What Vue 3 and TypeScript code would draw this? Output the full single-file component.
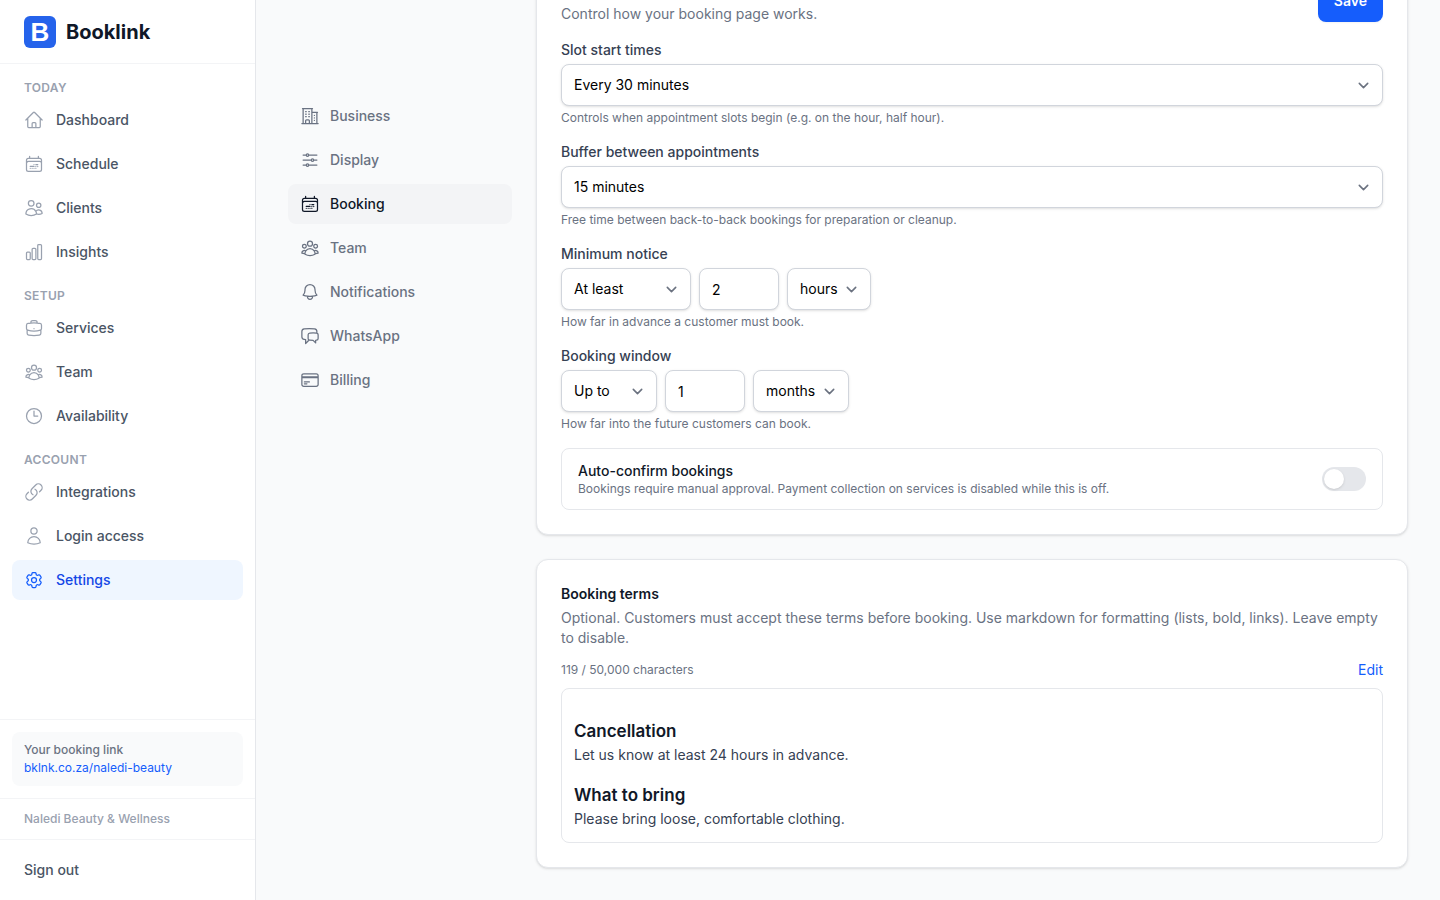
<script setup lang="ts">
import { onMounted, ref } from 'vue'

interface NavItem {
  label: string
  icon: string
  active?: boolean
}

interface NavGroup {
  title: string
  items: NavItem[]
}

const icons: Record<string, string> = {
  home: 'm2.25 12 8.954-8.955c.44-.439 1.152-.439 1.591 0L21.75 12M4.5 9.75v10.125c0 .621.504 1.125 1.125 1.125H9.75v-4.875c0-.621.504-1.125 1.125-1.125h2.25c.621 0 1.125.504 1.125 1.125V21h4.125c.621 0 1.125-.504 1.125-1.125V9.75M8.25 21h8.25',
  calendar: 'M6.75 2.994v2.25m10.5-2.25v2.25m-14.252 13.5V7.491a2.25 2.25 0 0 1 2.25-2.25h13.5a2.25 2.25 0 0 1 2.25 2.25v11.251m-18 0a2.25 2.25 0 0 0 2.25 2.25h13.5a2.25 2.25 0 0 0 2.25-2.25m-18 0v-7.5a2.25 2.25 0 0 1 2.25-2.25h13.5a2.25 2.25 0 0 1 2.25 2.25v7.5m-6.75-6h2.25m-9 2.25h4.5m.002-2.25h.005v.006H12v-.006Zm-.001 4.5h.006v.006h-.006v-.005Zm-2.25.001h.005v.006H9.75v-.006Zm-2.25 0h.005v.005h-.006v-.005Zm6.75-2.247h.005v.005h-.005v-.005Zm0 2.247h.006v.006h-.006v-.006Zm2.25-2.248h.006V15H16.5v-.005Z',
  users: 'M15 19.128a9.38 9.38 0 0 0 2.625.372 9.337 9.337 0 0 0 4.121-.952 4.125 4.125 0 0 0-7.533-2.493M15 19.128v-.003c0-1.113-.285-2.16-.786-3.07M15 19.128v.106A12.318 12.318 0 0 1 8.624 21c-2.331 0-4.512-.645-6.374-1.766l-.001-.109a6.375 6.375 0 0 1 11.964-3.07M12 6.375a3.375 3.375 0 1 1-6.75 0 3.375 3.375 0 0 1 6.75 0Zm8.25 2.25a2.625 2.625 0 1 1-5.25 0 2.625 2.625 0 0 1 5.25 0Z',
  chart: 'M3 13.125C3 12.504 3.504 12 4.125 12h2.25c.621 0 1.125.504 1.125 1.125v6.75C7.5 20.496 6.996 21 6.375 21h-2.25A1.125 1.125 0 0 1 3 19.875v-6.75ZM9.75 8.625c0-.621.504-1.125 1.125-1.125h2.25c.621 0 1.125.504 1.125 1.125v11.25c0 .621-.504 1.125-1.125 1.125h-2.25a1.125 1.125 0 0 1-1.125-1.125V8.625ZM16.5 4.125c0-.621.504-1.125 1.125-1.125h2.25C20.496 3 21 3.504 21 4.125v15.75c0 .621-.504 1.125-1.125 1.125h-2.25a1.125 1.125 0 0 1-1.125-1.125V4.125Z',
  briefcase: 'M20.25 14.15v4.25c0 1.094-.787 2.036-1.872 2.18-2.087.277-4.216.42-6.378.42s-4.291-.143-6.378-.42c-1.085-.144-1.872-1.086-1.872-2.18v-4.25m16.5 0a2.18 2.18 0 0 0 .75-1.661V8.706c0-1.081-.768-2.015-1.837-2.175a48.114 48.114 0 0 0-3.413-.387m4.5 8.006c-.194.165-.42.295-.673.38A23.978 23.978 0 0 1 12 15.75c-2.648 0-5.195-.429-7.577-1.22a2.016 2.016 0 0 1-.673-.38m0 0A2.18 2.18 0 0 1 3 12.489V8.706c0-1.081.768-2.015 1.837-2.175a48.111 48.111 0 0 1 3.413-.387m7.5 0V5.25A2.25 2.25 0 0 0 13.5 3h-3a2.25 2.25 0 0 0-2.25 2.25v.894m7.5 0a48.667 48.667 0 0 0-7.5 0M12 12.75h.008v.008H12v-.008Z',
  group: 'M18 18.72a9.094 9.094 0 0 0 3.741-.479 3 3 0 0 0-4.682-2.72m.94 3.198.001.031c0 .225-.012.447-.037.666A11.944 11.944 0 0 1 12 21c-2.17 0-4.207-.576-5.963-1.584A6.062 6.062 0 0 1 6 18.719m12 0a5.971 5.971 0 0 0-.941-3.197m0 0A5.995 5.995 0 0 0 12 12.75a5.995 5.995 0 0 0-5.058 2.772m0 0a3 3 0 0 0-4.681 2.72 8.986 8.986 0 0 0 3.74.477m.94-3.197a5.971 5.971 0 0 0-.94 3.197M15 6.75a3 3 0 1 1-6 0 3 3 0 0 1 6 0Zm6 3a2.25 2.25 0 1 1-4.5 0 2.25 2.25 0 0 1 4.5 0Zm-13.5 0a2.25 2.25 0 1 1-4.5 0 2.25 2.25 0 0 1 4.5 0Z',
  clock: 'M12 6v6h4.5m4.5 0a9 9 0 1 1-18 0 9 9 0 0 1 18 0Z',
  link: 'M13.19 8.688a4.5 4.5 0 0 1 1.242 7.244l-4.5 4.5a4.5 4.5 0 0 1-6.364-6.364l1.757-1.757m13.35-.622 1.757-1.757a4.5 4.5 0 0 0-6.364-6.364l-4.5 4.5a4.5 4.5 0 0 0 1.242 7.244',
  user: 'M15.75 6a3.75 3.75 0 1 1-7.5 0 3.75 3.75 0 0 1 7.5 0ZM4.501 20.118a7.5 7.5 0 0 1 14.998 0A17.933 17.933 0 0 1 12 21.75c-2.676 0-5.216-.584-7.499-1.632Z',
  cog: 'M9.594 3.94c.09-.542.56-.94 1.11-.94h2.593c.55 0 1.02.398 1.11.94l.213 1.281c.063.374.313.686.645.87.074.04.147.083.22.127.325.196.72.257 1.075.124l1.217-.456a1.125 1.125 0 0 1 1.37.49l1.296 2.247a1.125 1.125 0 0 1-.26 1.431l-1.003.827c-.293.241-.438.613-.43.992a7.723 7.723 0 0 1 0 .255c-.008.378.137.75.43.991l1.004.827c.424.35.534.955.26 1.43l-1.298 2.247a1.125 1.125 0 0 1-1.369.491l-1.217-.456c-.355-.133-.75-.072-1.076.124a6.47 6.47 0 0 1-.22.128c-.331.183-.581.495-.644.869l-.213 1.281c-.09.543-.56.94-1.11.94h-2.594c-.55 0-1.019-.398-1.11-.94l-.213-1.281c-.062-.374-.312-.686-.644-.87a6.52 6.52 0 0 1-.22-.127c-.325-.196-.72-.257-1.076-.124l-1.217.456a1.125 1.125 0 0 1-1.369-.49l-1.297-2.247a1.125 1.125 0 0 1 .26-1.431l1.004-.827c.292-.24.437-.613.43-.991a6.932 6.932 0 0 1 0-.255c.007-.38-.138-.751-.43-.992l-1.004-.827a1.125 1.125 0 0 1-.26-1.43l1.297-2.247a1.125 1.125 0 0 1 1.37-.491l1.216.456c.356.133.751.072 1.076-.124.072-.044.146-.086.22-.128.332-.183.582-.495.644-.869l.214-1.28ZM15 12a3 3 0 1 1-6 0 3 3 0 0 1 6 0Z',
  building: 'M2.25 21h19.5m-18-18v18m10.5-18v18m6-13.5V21M6.75 6.75h.75m-.75 3h.75m-.75 3h.75m3-6h.75m-.75 3h.75m-.75 3h.75M6.75 21v-3.375c0-.621.504-1.125 1.125-1.125h2.25c.621 0 1.125.504 1.125 1.125V21M3 3h12m-.75 4.5H21m-3.75 3.75h.008v.008h-.008v-.008Zm0 3h.008v.008h-.008v-.008Zm0 3h.008v.008h-.008v-.008Z',
  sliders: 'M10.5 6h9.75M10.5 6a1.5 1.5 0 1 1-3 0m3 0a1.5 1.5 0 1 0-3 0M3.75 6H7.5m3 12h9.75m-9.75 0a1.5 1.5 0 0 1-3 0m3 0a1.5 1.5 0 0 0-3 0m-3.75 0H7.5m9-6h3.75m-3.75 0a1.5 1.5 0 0 1-3 0m3 0a1.5 1.5 0 0 0-3 0m-9.75 0h9.75',
  bell: 'M14.857 17.082a23.848 23.848 0 0 0 5.454-1.31A8.967 8.967 0 0 1 18 9.75V9A6 6 0 0 0 6 9v.75a8.967 8.967 0 0 1-2.312 6.022c1.733.64 3.56 1.085 5.455 1.31m5.714 0a24.255 24.255 0 0 1-5.714 0m5.714 0a3 3 0 1 1-5.714 0',
  chat: 'M20.25 8.511c.884.284 1.5 1.128 1.5 2.097v4.286c0 1.136-.847 2.1-1.98 2.193-.34.027-.68.052-1.02.072v3.091l-3-3c-1.354 0-2.694-.055-4.02-.163a2.115 2.115 0 0 1-.825-.242m9.345-8.334a2.126 2.126 0 0 0-.476-.095 48.64 48.64 0 0 0-8.048 0c-1.131.094-1.976 1.057-1.976 2.192v4.286c0 .837.46 1.58 1.155 1.951m9.345-8.334V6.637c0-1.621-1.152-3.026-2.76-3.235A48.455 48.455 0 0 0 11.25 3c-2.115 0-4.198.137-6.24.402-1.608.209-2.76 1.614-2.76 3.235v6.226c0 1.621 1.152 3.026 2.76 3.235.577.075 1.157.14 1.74.194V21l4.155-4.155',
  card: 'M2.25 8.25h19.5M2.25 9h19.5m-16.5 5.25h6m-6 2.25h3m-3.75 3h15a2.25 2.25 0 0 0 2.25-2.25V6.75A2.25 2.25 0 0 0 19.5 4.5h-15a2.25 2.25 0 0 0-2.25 2.25v10.5A2.25 2.25 0 0 0 4.5 19.5Z',
}

const groups: NavGroup[] = [
  {
    title: 'Today',
    items: [
      { label: 'Dashboard', icon: 'home' },
      { label: 'Schedule', icon: 'calendar' },
      { label: 'Clients', icon: 'users' },
      { label: 'Insights', icon: 'chart' },
    ],
  },
  {
    title: 'Setup',
    items: [
      { label: 'Services', icon: 'briefcase' },
      { label: 'Team', icon: 'group' },
      { label: 'Availability', icon: 'clock' },
    ],
  },
  {
    title: 'Account',
    items: [
      { label: 'Integrations', icon: 'link' },
      { label: 'Login access', icon: 'user' },
      { label: 'Settings', icon: 'cog', active: true },
    ],
  },
]

const sections: NavItem[] = [
  { label: 'Business', icon: 'building' },
  { label: 'Display', icon: 'sliders' },
  { label: 'Booking', icon: 'calendar', active: true },
  { label: 'Team', icon: 'group' },
  { label: 'Notifications', icon: 'bell' },
  { label: 'WhatsApp', icon: 'chat' },
  { label: 'Billing', icon: 'card' },
]

const noticeAmount = ref('2')
const windowAmount = ref('1')
const autoConfirm = ref(false)
const content = ref<HTMLElement | null>(null)

onMounted(() => {
  if (content.value) content.value.scrollTop = content.value.scrollHeight
})
</script>

<template>
  <div class="app">
    <aside class="sidebar">
      <div class="brand">
        <span class="brand-mark">B</span>
        <span class="brand-name">Booklink</span>
      </div>

      <nav class="main-nav">
        <section v-for="group in groups" :key="group.title" class="nav-group">
          <h2 class="nav-title">{{ group.title }}</h2>
          <a
            v-for="item in group.items"
            :key="item.label"
            href="#"
            class="nav-link"
            :class="{ active: item.active }"
          >
            <svg class="icon" viewBox="0 0 24 24" aria-hidden="true"><path :d="icons[item.icon]" /></svg>
            <span>{{ item.label }}</span>
          </a>
        </section>
      </nav>

      <div class="link-area">
        <div class="link-box">
          <span class="link-label">Your booking link</span>
          <a href="#" class="link-url">bklnk.co.za/naledi-beauty</a>
        </div>
      </div>
      <div class="business">Naledi Beauty &amp; Wellness</div>
      <div class="sign-out">
        <button type="button">Sign out</button>
      </div>
    </aside>

    <nav class="sub-nav">
      <a
        v-for="item in sections"
        :key="item.label"
        href="#"
        class="sub-link"
        :class="{ active: item.active }"
      >
        <svg class="icon" viewBox="0 0 24 24" aria-hidden="true"><path :d="icons[item.icon]" /></svg>
        <span>{{ item.label }}</span>
      </a>
    </nav>

    <main ref="content" class="content">
      <section class="card form">
        <header class="card-head">
          <p class="lead">Control how your booking page works.</p>
          <button type="button" class="save">Save</button>
        </header>

        <div class="field">
          <label for="slot">Slot start times</label>
          <div class="select">
            <select id="slot" aria-describedby="slot-hint"><option>Every 30 minutes</option></select>
            <svg class="chevron" viewBox="0 0 20 20" aria-hidden="true"><path d="m6 8 4 4 4-4" /></svg>
          </div>
          <p id="slot-hint" class="hint">Controls when appointment slots begin (e.g. on the hour, half hour).</p>
        </div>

        <div class="field">
          <label for="buffer">Buffer between appointments</label>
          <div class="select">
            <select id="buffer" aria-describedby="buffer-hint"><option>15 minutes</option></select>
            <svg class="chevron" viewBox="0 0 20 20" aria-hidden="true"><path d="m6 8 4 4 4-4" /></svg>
          </div>
          <p id="buffer-hint" class="hint">Free time between back-to-back bookings for preparation or cleanup.</p>
        </div>

        <div class="field">
          <label id="notice-label" for="notice">Minimum notice</label>
          <div class="row">
            <div class="select wide">
              <select aria-labelledby="notice-label"><option>At least</option></select>
              <svg class="chevron" viewBox="0 0 20 20" aria-hidden="true"><path d="m6 8 4 4 4-4" /></svg>
            </div>
            <input id="notice" v-model="noticeAmount" class="amount" type="text" inputmode="numeric" />
            <div class="select">
              <select aria-labelledby="notice-label"><option>hours</option></select>
              <svg class="chevron" viewBox="0 0 20 20" aria-hidden="true"><path d="m6 8 4 4 4-4" /></svg>
            </div>
          </div>
          <p class="hint">How far in advance a customer must book.</p>
        </div>

        <div class="field">
          <label id="window-label" for="window">Booking window</label>
          <div class="row">
            <div class="select narrow">
              <select aria-labelledby="window-label"><option>Up to</option></select>
              <svg class="chevron" viewBox="0 0 20 20" aria-hidden="true"><path d="m6 8 4 4 4-4" /></svg>
            </div>
            <input id="window" v-model="windowAmount" class="amount" type="text" inputmode="numeric" />
            <div class="select">
              <select aria-labelledby="window-label"><option>months</option></select>
              <svg class="chevron" viewBox="0 0 20 20" aria-hidden="true"><path d="m6 8 4 4 4-4" /></svg>
            </div>
          </div>
          <p class="hint">How far into the future customers can book.</p>
        </div>

        <div class="toggle-row">
          <div>
            <label class="toggle-label" for="auto">Auto-confirm bookings</label>
            <p class="hint">Bookings require manual approval. Payment collection on services is disabled while this is off.</p>
          </div>
          <input id="auto" v-model="autoConfirm" class="toggle" type="checkbox" role="switch" />
        </div>
      </section>

      <section class="card">
        <h2 class="card-title">Booking terms</h2>
        <p class="lead">
          Optional. Customers must accept these terms before booking. Use markdown for formatting (lists, bold,
          links). Leave empty to disable.
        </p>
        <div class="terms-bar">
          <span class="hint">119 / 50,000 characters</span>
          <button type="button" class="edit">Edit</button>
        </div>
        <article class="terms">
          <h3>Cancellation</h3>
          <p>Let us know at least 24 hours in advance.</p>
          <h3>What to bring</h3>
          <p>Please bring loose, comfortable clothing.</p>
        </article>
      </section>
    </main>
  </div>
</template>

<style>
body {
  margin: 0;
  background: #f9fafb;
}
</style>

<style scoped>
.app {
  display: flex;
  height: 100vh;
  overflow: hidden;
  background: #f9fafb;
  color: #101828;
  font-family: Inter, 'Liberation Sans', sans-serif;
  font-size: 14px;
  line-height: 20px;
}

.app *,
.app *::before {
  box-sizing: border-box;
}

h2,
h3,
p {
  margin: 0;
}

a {
  text-decoration: none;
}

button,
input,
select {
  margin: 0;
  font: inherit;
}

button {
  border: 0;
  padding: 0;
  background: none;
  cursor: pointer;
}

.icon {
  flex: none;
  width: 20px;
  height: 20px;
  fill: none;
  stroke: currentColor;
  stroke-width: 1.5;
  stroke-linecap: round;
  stroke-linejoin: round;
}

.sidebar {
  display: flex;
  flex: none;
  flex-direction: column;
  width: 256px;
  border-right: 1px solid #e5e7eb;
  background: #fff;
}

.brand {
  display: flex;
  flex: none;
  align-items: center;
  gap: 10px;
  height: 64px;
  padding: 0 24px;
  border-bottom: 1px solid #f3f4f6;
}

.brand-mark {
  display: flex;
  align-items: center;
  justify-content: center;
  width: 32px;
  height: 32px;
  border-radius: 6px;
  background: #2563eb;
  color: #fff;
  font-family: 'Liberation Sans', Arial, sans-serif;
  font-size: 26px;
  font-weight: 700;
  line-height: 32px;
}

.brand-name {
  font-size: 20px;
  font-weight: 700;
  line-height: 28px;
}

.main-nav {
  display: flex;
  flex: 1;
  flex-direction: column;
  gap: 16px;
  min-height: 0;
  overflow: hidden;
  padding: 16px 12px;
}

.nav-group {
  display: flex;
  flex-direction: column;
  gap: 4px;
}

.nav-title {
  padding: 0 12px;
  color: #99a1af;
  font-size: 12px;
  font-weight: 600;
  line-height: 16px;
  letter-spacing: 0.3px;
  text-transform: uppercase;
}

.nav-link {
  display: flex;
  align-items: center;
  gap: 12px;
  height: 40px;
  padding: 0 12px;
  border-radius: 8px;
  color: #4a5565;
  font-weight: 500;
}

.nav-link .icon {
  color: #99a1af;
}

.nav-link.active {
  background: #eff6ff;
  color: #1447e6;
}

.nav-link.active .icon {
  color: #155dfc;
}

.link-area {
  padding: 12px;
  border-top: 1px solid #f3f4f6;
}

.link-box {
  display: flex;
  flex-direction: column;
  gap: 2px;
  padding: 10px 12px;
  border-radius: 8px;
  background: #f9fafb;
  font-size: 12px;
  line-height: 16px;
}

.link-label {
  color: #6a7282;
  font-weight: 500;
}

.link-url {
  color: #155dfc;
}

.business {
  padding: 12px 24px;
  border-top: 1px solid #f3f4f6;
  color: #99a1af;
  font-size: 12px;
  font-weight: 500;
  line-height: 16px;
}

.sign-out {
  padding: 12px;
  border-top: 1px solid #f3f4f6;
}

.sign-out button {
  width: 100%;
  height: 36px;
  padding: 0 12px;
  color: #4a5565;
  font-weight: 500;
  text-align: left;
}

.sub-nav {
  display: flex;
  flex: none;
  flex-direction: column;
  gap: 4px;
  width: 224px;
  margin-left: 32px;
  padding-top: 96px;
}

.sub-link {
  display: flex;
  align-items: center;
  gap: 10px;
  height: 40px;
  padding: 0 12px;
  border-radius: 8px;
  color: #6a7282;
  font-weight: 500;
}

.sub-link.active {
  background: #f3f4f6;
  color: #101828;
}

.content {
  display: flex;
  flex: 1;
  flex-direction: column;
  gap: 24px;
  min-width: 0;
  overflow-y: auto;
  padding: 32px 32px 32px 24px;
  scrollbar-width: none;
}

.card {
  flex: none;
  padding: 24px;
  border: 1px solid #e5e7eb;
  border-radius: 12px;
  background: #fff;
  box-shadow: 0 1px 3px rgba(0, 0, 0, 0.1), 0 1px 2px -1px rgba(0, 0, 0, 0.1);
}

.form {
  display: flex;
  flex-direction: column;
  gap: 16px;
}

.card-head {
  display: flex;
  align-items: flex-start;
  justify-content: space-between;
  gap: 16px;
  height: 44px;
}

.card-head .lead {
  align-self: flex-end;
}

.card-title {
  margin-bottom: 4px;
  font-size: 14px;
  font-weight: 600;
}

.lead {
  color: #6a7282;
}

.save {
  height: 42px;
  padding: 0 16px;
  border-radius: 8px;
  background: #155dfc;
  box-shadow: 0 1px 2px rgba(0, 0, 0, 0.05);
  color: #fff;
  font-weight: 600;
}

.field {
  display: flex;
  flex-direction: column;
  gap: 4px;
}

.field label {
  color: #364153;
  font-weight: 500;
}

.hint {
  color: #6a7282;
  font-size: 12px;
  line-height: 16px;
}

.row {
  display: flex;
  gap: 8px;
}

.select {
  position: relative;
}

.select.wide {
  width: 130px;
}

.select.narrow {
  width: 96px;
}

.select select,
.amount {
  height: 42px;
  border: 1px solid #d1d5dc;
  border-radius: 8px;
  background: #fff;
  box-shadow: 0 1px 3px rgba(0, 0, 0, 0.1), 0 1px 2px -1px rgba(0, 0, 0, 0.1);
  color: #000;
}

.select select {
  display: block;
  width: 100%;
  padding: 0 32px 0 12px;
  appearance: none;
}

.amount {
  width: 80px;
  padding: 0 12px;
}

.chevron {
  position: absolute;
  top: 11px;
  right: 9px;
  width: 21px;
  height: 21px;
  fill: none;
  stroke: #6b7280;
  stroke-width: 1.5;
  stroke-linecap: round;
  stroke-linejoin: round;
  pointer-events: none;
}

.toggle-row {
  display: flex;
  align-items: center;
  justify-content: space-between;
  gap: 16px;
  padding: 12px 16px;
  border: 1px solid #e5e7eb;
  border-radius: 8px;
}

.toggle-label {
  display: block;
  font-weight: 500;
}

.toggle {
  flex: none;
  width: 44px;
  height: 24px;
  padding: 2px;
  border-radius: 12px;
  background: #e5e7eb;
  appearance: none;
  cursor: pointer;
}

.toggle::before {
  display: block;
  width: 20px;
  height: 20px;
  border-radius: 50%;
  background: #fff;
  box-shadow: 0 1px 3px rgba(0, 0, 0, 0.1), 0 1px 2px -1px rgba(0, 0, 0, 0.1);
  content: '';
}

.toggle:checked {
  background: #155dfc;
}

.toggle:checked::before {
  margin-left: auto;
}

.terms-bar {
  display: flex;
  align-items: center;
  justify-content: space-between;
  margin: 12px 0 8px;
}

.edit {
  color: #155dfc;
}

.terms {
  padding: 12px 12px 13px;
  border: 1px solid #e5e7eb;
  border-radius: 8px;
}

.terms h3 {
  margin: 18px 0 2px;
  font-size: 17px;
  font-weight: 600;
  line-height: 24px;
}

.terms p {
  color: #364153;
}
</style>
